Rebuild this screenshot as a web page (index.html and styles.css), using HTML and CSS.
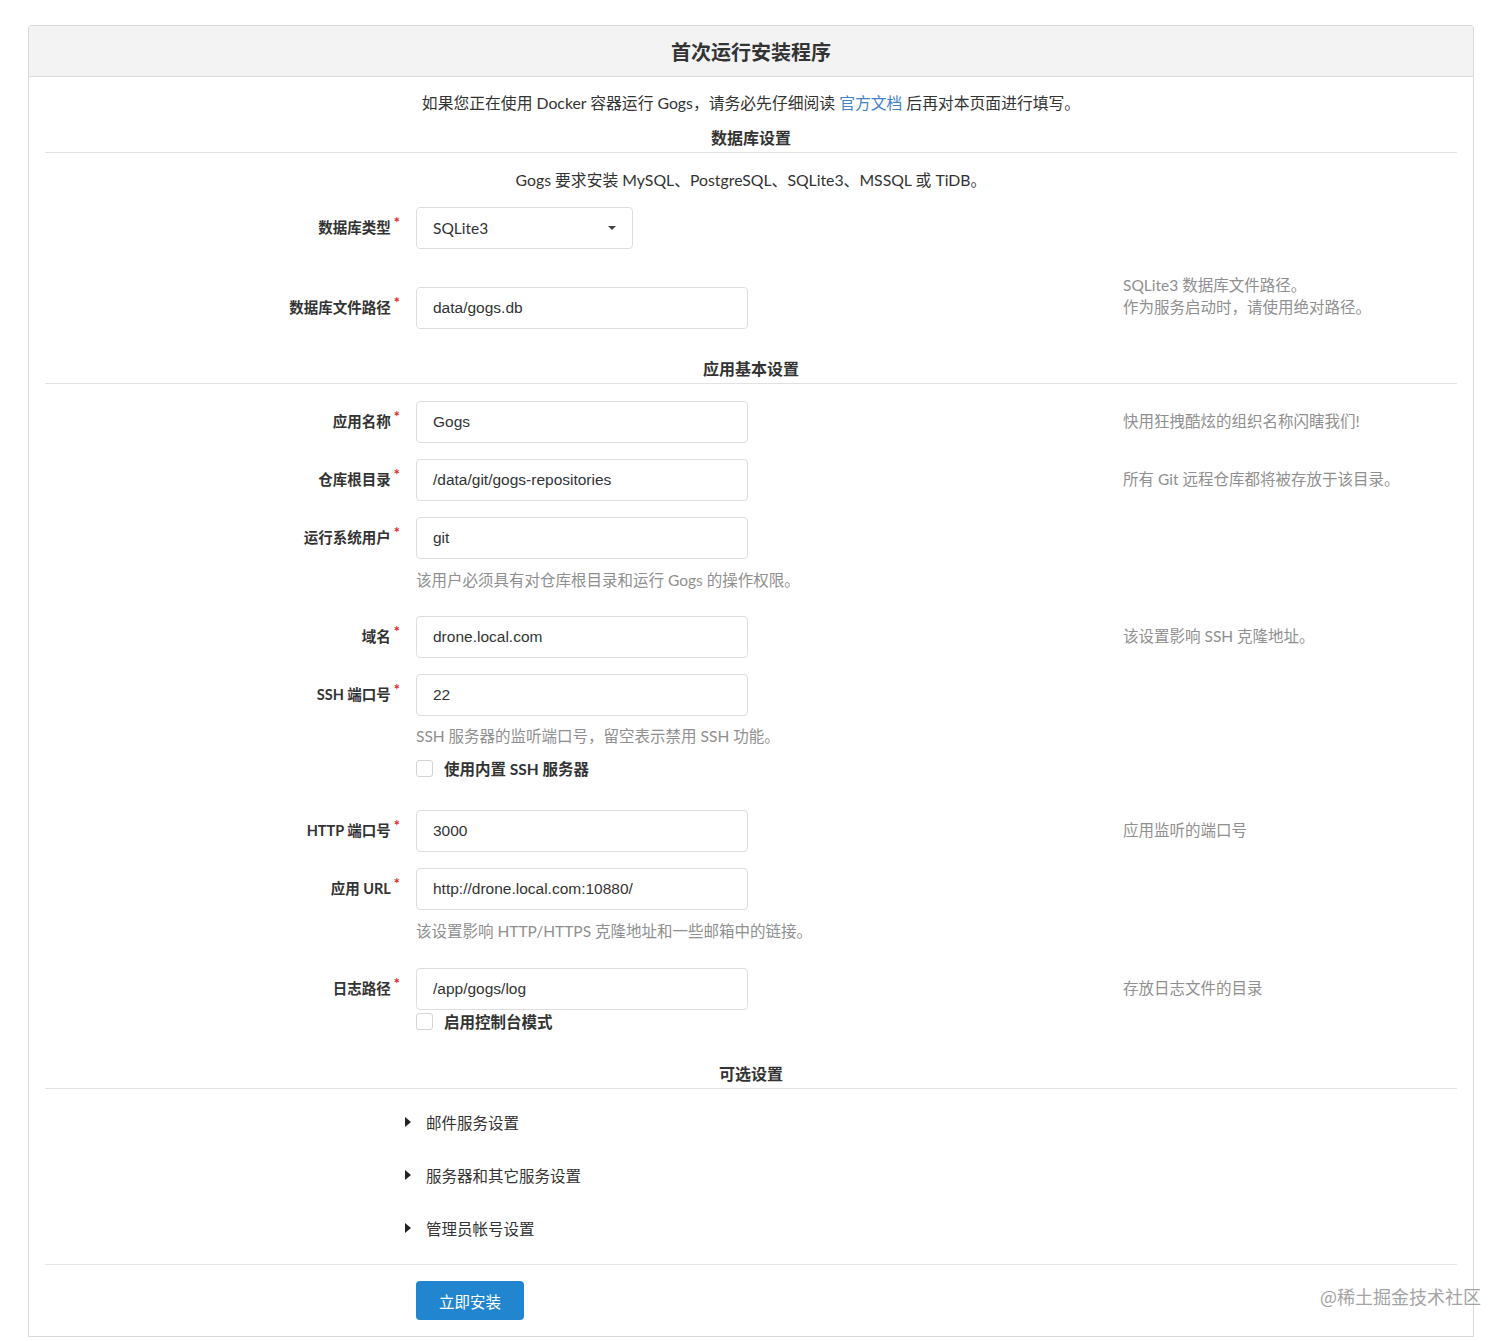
FILE: index.html
```html
<!DOCTYPE html>
<html>
<head>
    <meta charset="UTF-8">
    <title>首次运行安装程序</title>
    <link rel="stylesheet" href="styles.css">
</head>
<body>
<div class="installCard">
    <h3 class="installHeader">首次运行安装程序</h3>
    <div class="installBody">
        <p class="installIntro">如果您正在使用 Docker 容器运行 Gogs，请务必先仔细阅读 <a href="#">官方文档</a> 后再对本页面进行填写。</p>

        <!-- 数据库设置 -->
        <h4 class="dividingHeader">数据库设置</h4>
        <p class="sectionNote">Gogs 要求安装 MySQL、PostgreSQL、SQLite3、MSSQL 或 TiDB。</p>

        <div class="fieldRow firstRow">
            <label class="fieldLabel">数据库类型</label>
            <div class="fieldControl">
                <div class="dropdownBox">
                    <span>SQLite3</span>
                    <i class="dropdownCaret"></i>
                </div>
            </div>
            <div class="fieldHelp"></div>
        </div>
        <div class="fieldRow dbPathRow">
            <label class="fieldLabel">数据库文件路径</label>
            <div class="fieldControl">
                <input class="fieldInput" type="text" value="data/gogs.db">
            </div>
            <div class="fieldHelp twoLines">SQLite3 数据库文件路径。<br>作为服务启动时，请使用绝对路径。</div>
        </div>

        <!-- 应用基本设置 -->
        <h4 class="dividingHeader appHeader">应用基本设置</h4>

        <div class="fieldRow appFirst">
            <label class="fieldLabel">应用名称</label>
            <div class="fieldControl">
                <input class="fieldInput" type="text" value="Gogs">
            </div>
            <div class="fieldHelp">快用狂拽酷炫的组织名称闪瞎我们!</div>
        </div>
        <div class="fieldRow">
            <label class="fieldLabel">仓库根目录</label>
            <div class="fieldControl">
                <input class="fieldInput" type="text" value="/data/git/gogs-repositories">
            </div>
            <div class="fieldHelp">所有 Git 远程仓库都将被存放于该目录。</div>
        </div>
        <div class="fieldRow">
            <label class="fieldLabel">运行系统用户</label>
            <div class="fieldControl">
                <input class="fieldInput" type="text" value="git">
                <div class="inlineNote">该用户必须具有对仓库根目录和运行 Gogs 的操作权限。</div>
            </div>
            <div class="fieldHelp"></div>
        </div>
        <div class="fieldRow gap25">
            <label class="fieldLabel">域名</label>
            <div class="fieldControl">
                <input class="fieldInput" type="text" value="drone.local.com">
            </div>
            <div class="fieldHelp">该设置影响 SSH 克隆地址。</div>
        </div>
        <div class="fieldRow">
            <label class="fieldLabel">SSH 端口号</label>
            <div class="fieldControl">
                <input class="fieldInput" type="text" value="22">
                <div class="inlineNote noteTight">SSH 服务器的监听端口号，留空表示禁用 SSH 功能。</div>
                <div class="checkLine">
                    <span class="checkBox"></span>
                    <span class="checkText">使用内置 SSH 服务器</span>
                </div>
            </div>
            <div class="fieldHelp"></div>
        </div>
        <div class="fieldRow gap31">
            <label class="fieldLabel">HTTP 端口号</label>
            <div class="fieldControl">
                <input class="fieldInput" type="text" value="3000">
            </div>
            <div class="fieldHelp">应用监听的端口号</div>
        </div>
        <div class="fieldRow">
            <label class="fieldLabel">应用 URL</label>
            <div class="fieldControl">
                <input class="fieldInput" type="text" value="http://drone.local.com:10880/">
                <div class="inlineNote">该设置影响 HTTP/HTTPS 克隆地址和一些邮箱中的链接。</div>
            </div>
            <div class="fieldHelp"></div>
        </div>
        <div class="fieldRow gap26">
            <label class="fieldLabel">日志路径</label>
            <div class="fieldControl">
                <input class="fieldInput" type="text" value="/app/gogs/log">
                <div class="checkLine checkFlush">
                    <span class="checkBox"></span>
                    <span class="checkText">启用控制台模式</span>
                </div>
            </div>
            <div class="fieldHelp">存放日志文件的目录</div>
        </div>

        <!-- 可选设置 -->
        <h4 class="dividingHeader optionalHeader">可选设置</h4>
        <div class="foldList">
            <div class="foldItem"><i class="foldArrow"></i>邮件服务设置</div>
            <div class="foldItem"><i class="foldArrow"></i>服务器和其它服务设置</div>
            <div class="foldItem"><i class="foldArrow"></i>管理员帐号设置</div>
        </div>

        <div class="actionsBar">
            <button class="installButton" type="button">立即安装</button>
        </div>
    </div>
</div>
<span class="watermark">@稀土掘金技术社区</span>
</body>
</html>
```

FILE: styles.css
```css
/*页面*/
body {
    margin: 0;
    position: relative;
    background: #fff;
    color: #333;
    font-family: "Lato", "Noto Sans CJK SC", sans-serif;
}

/*卡片*/
.installCard {
    margin: 25px 38px 0 28px;
    border: 1px solid #d9d9d9;
    border-radius: 3px 3px 0 0;
}

.installHeader {
    margin: 0;
    height: 49px;
    padding-top: 1px;
    line-height: 50px;
    background: #f3f3f3;
    border-bottom: 1px solid #dcdcdc;
    text-align: center;
    font-family: "Noto Sans CJK SC", sans-serif;
    font-size: 20px;
    font-weight: bold;
    color: #333;
}

.installBody {
    padding: 15px 16px 16px 16px;
}

.installIntro {
    margin: 0;
    text-align: center;
    font-size: 15.8px;
    line-height: 22px;
}

.installIntro a {
    color: #4183c4;
    text-decoration: none;
}

/*分组标题*/
.dividingHeader {
    margin: 13px 0 0 0;
    padding-bottom: 3px;
    border-bottom: 1px solid #e2e2e2;
    text-align: center;
    font-size: 16px;
    line-height: 22px;
    font-weight: bold;
    color: #333;
}

.appHeader {
    margin-top: 29px;
}

.optionalHeader {
    margin-top: 31px;
}

.sectionNote {
    margin: 16px 0 0 0;
    text-align: center;
    font-size: 15.8px;
    line-height: 22px;
}

/*表单行*/
.fieldRow {
    display: grid;
    grid-template-columns: 355px 691px 1fr;
    column-gap: 16px;
    align-items: start;
    margin-top: 16px;
}

.firstRow {
    margin-top: 16px;
}

.dbPathRow {
    margin-top: 38px;
}

.appFirst {
    margin-top: 17px;
}

.gap25 {
    margin-top: 25px;
}

.gap26 {
    margin-top: 26px;
}

.gap31 {
    margin-top: 31px;
}

.fieldLabel {
    text-align: right;
    line-height: 41px;
    font-size: 14.5px;
    font-weight: bold;
    color: #333;
}

.fieldLabel:after {
    content: "*";
    position: relative;
    top: -5px;
    margin-left: 3px;
    color: #db2828;
    font-weight: bold;
}

.fieldControl {
    display: flex;
    flex-direction: column;
    align-items: flex-start;
}

.fieldInput {
    box-sizing: border-box;
    width: 332px;
    height: 42px;
    margin: 0;
    padding: 0 16px;
    border: 1px solid #dedede;
    border-radius: 4px;
    background: #fff;
    color: #333;
    font-family: "Liberation Sans", Arial, sans-serif;
    font-size: 15.5px;
    outline: none;
}

.dropdownBox {
    box-sizing: border-box;
    width: 217px;
    height: 42px;
    padding: 0 16px;
    border: 1px solid #dedede;
    border-radius: 4px;
    display: flex;
    align-items: center;
    justify-content: space-between;
    font-size: 15.5px;
    color: #333;
}

.dropdownCaret {
    width: 0;
    height: 0;
    border-left: 4px solid transparent;
    border-right: 4px solid transparent;
    border-top: 4px solid #444;
}

.fieldHelp {
    font-size: 15.5px;
    line-height: 40px;
    color: #8f8f8f;
}

.fieldHelp.twoLines {
    margin-top: -13px;
    line-height: 22px;
}

.inlineNote {
    margin-top: 10px;
    font-size: 15.5px;
    line-height: 22px;
    color: #8f8f8f;
}

.noteTight {
    margin-top: 9px;
}

.checkLine {
    margin-top: 10px;
    display: flex;
    align-items: center;
    height: 22px;
}

.checkFlush {
    margin-top: 0;
}

.checkBox {
    box-sizing: border-box;
    width: 17px;
    height: 17px;
    border: 1px solid #d4d4d5;
    border-radius: 3px;
    background: #fff;
    margin-right: 11px;
}

.checkText {
    font-size: 15.5px;
    font-weight: bold;
    color: #333;
}

/*可选设置*/
.foldList {
    margin-left: 360px;
    margin-top: 22px;
}

.foldItem {
    display: flex;
    align-items: center;
    height: 22px;
    margin-bottom: 31px;
    font-size: 15.5px;
    color: #333;
}

.foldItem:last-child {
    margin-bottom: 0;
}

.foldArrow {
    width: 0;
    height: 0;
    border-top: 5px solid transparent;
    border-bottom: 5px solid transparent;
    border-left: 6px solid #222;
    margin-right: 15px;
}

.actionsBar {
    margin-top: 25px;
    padding-top: 16px;
    padding-left: 371px;
    border-top: 1px solid #e6e6e6;
}

.installButton {
    display: block;
    width: 108px;
    height: 39px;
    margin: 0;
    border: none;
    border-radius: 4px;
    background: #2185d0;
    color: #fff;
    font-family: "Noto Sans CJK SC", sans-serif;
    font-size: 15.5px;
    cursor: pointer;
}

/*水印*/
.watermark {
    position: absolute;
    left: 1320px;
    top: 1284px;
    font-family: "Noto Sans CJK SC", sans-serif;
    font-size: 18px;
    line-height: 24px;
    color: #a3a3a3;
    white-space: nowrap;
}
```
